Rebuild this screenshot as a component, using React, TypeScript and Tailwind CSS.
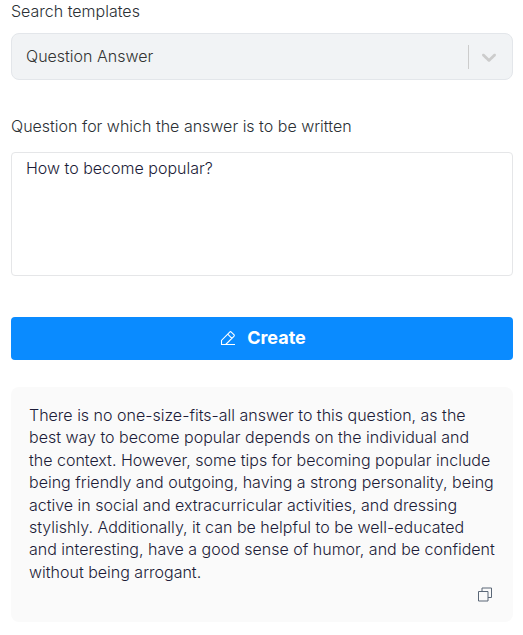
import { useState } from "react";

const answer =
	"There is no one-size-fits-all answer to this question, as the best way to become popular depends on the individual and the context. However, some tips for becoming popular include being friendly and outgoing, having a strong personality, being active in social and extracurricular activities, and dressing stylishly. Additionally, it can be helpful to be well-educated and interesting, have a good sense of humor, and be confident without being arrogant.";

function ChevronIcon() {
	return (
		<svg className="size-6" viewBox="0 0 20 20" fill="currentColor" aria-hidden="true">
			<path d="M4.516 7.548c0.436-0.446 1.043-0.481 1.576 0l3.908 3.747 3.908-3.747c0.533-0.481 1.141-0.446 1.574 0 0.436 0.445 0.408 1.197 0 1.615-0.406 0.418-4.695 4.502-4.695 4.502-0.217 0.223-0.502 0.335-0.787 0.335s-0.57-0.112-0.789-0.335c0 0-4.287-4.084-4.695-4.502s-0.436-1.17 0-1.615z" />
		</svg>
	);
}

function PencilIcon() {
	return (
		<svg className="size-4" viewBox="0 0 16 16" fill="none" stroke="currentColor" strokeWidth="1.1" aria-hidden="true">
			<path d="M1.5 14.5V10.4L9.7 2.1Q10.5 1.3 11.3 2.1L13.9 4.7Q14.7 5.5 13.9 6.3L5.7 14.5M7.7 4.1L11.9 8.3M1 14.5H15" />
		</svg>
	);
}

function CopyIcon() {
	return (
		<svg className="size-4" viewBox="0 0 16 16" fill="none" stroke="#5a6777" aria-hidden="true">
			<path d="M5 5.5V2H14.5V11.5H11" />
			<path d="M1.5 5.5H11V15H1.5Z" />
		</svg>
	);
}

export default function App() {
	const [question, setQuestion] = useState("How to become popular?");

	return (
		<main className="flex flex-col pl-[11px] pr-[10px] pb-3 bg-white font-['Inter',sans-serif] font-light text-[16px] leading-[22px] text-[#2b3035]">
			<label htmlFor="template">Search templates</label>
			<div className="relative mt-[11px]">
				<select
					id="template"
					disabled
					className="w-full h-[47px] appearance-none rounded-lg border border-[#e3e6ea] bg-[#f1f3f5] px-[14px] pb-0.5 text-[#333] opacity-100"
				>
					<option>Question Answer</option>
				</select>
				<div className="pointer-events-none absolute inset-y-0 right-3 flex items-center gap-2 text-[#ccc]">
					<span className="h-6 w-px bg-[#ccc]" />
					<ChevronIcon />
				</div>
			</div>

			<label htmlFor="question" className="mt-[35px]">
				Question for which the answer is to be written
			</label>
			<textarea
				id="question"
				value={question}
				onChange={(e) => setQuestion(e.target.value)}
				className="mt-[15px] h-[124px] w-full resize-none rounded border border-[#e5e6e8] px-[14px] py-1 text-[#1c1c38]"
			/>

			<button
				type="button"
				className="mt-[41px] flex h-[43px] items-center justify-center gap-[11px] rounded bg-[#0a8bff] pb-0.5 pl-0.5 text-lg font-bold text-white"
			>
				<PencilIcon />
				Create
			</button>

			<section className="mt-[27px] flex flex-col rounded-lg bg-[#fafafa] px-[18px] pt-[17px] pb-5 text-[#1c1c38]">
				<p className="leading-[1.4]">{answer}</p>
				<button type="button" aria-label="Copy answer" className="mt-[3px] mr-0.5 self-end">
					<CopyIcon />
				</button>
			</section>
		</main>
	);
}
